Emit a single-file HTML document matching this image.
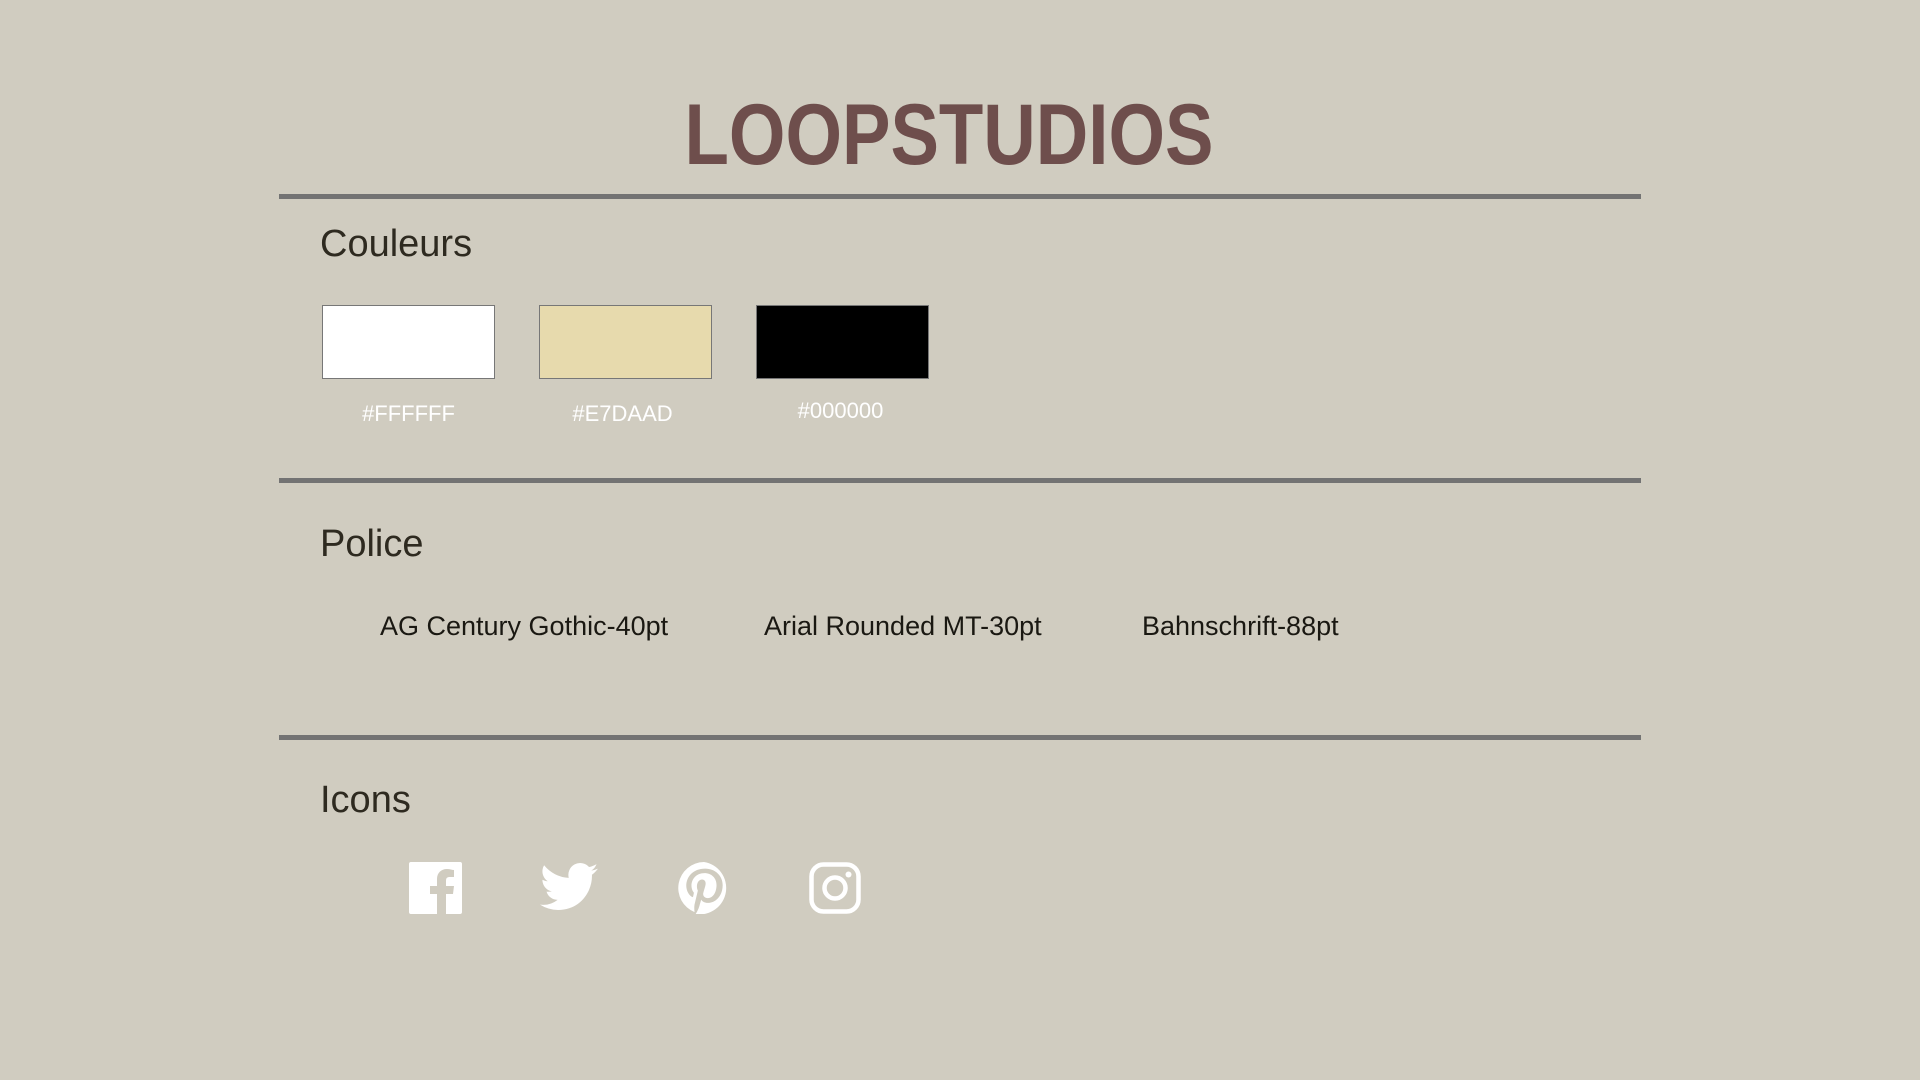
<!DOCTYPE html>
<html><head><meta charset="utf-8"><style>
html,body{margin:0;padding:0}
body{width:1920px;height:1080px;background:#d0ccc0;position:relative;overflow:hidden;font-family:"Liberation Sans",sans-serif}
.a{position:absolute}
.title{left:0;width:1898px;text-align:center;top:92px;font-size:86px;font-weight:bold;color:#6e4e4c;line-height:86px;transform:scaleX(0.845);transform-origin:949px 0}
.hr{left:279px;width:1362px;height:5px;background:#737373}
.h{left:320px;font-size:38px;color:#2e2a20;line-height:40px}
.sw{top:305px;width:171px;height:72px;border:1px solid #777}
.lab{width:173px;text-align:center;color:#fff;font-size:22px;line-height:24px}
.f{top:611px;font-size:27px;color:#1a1812;line-height:30px}
</style></head><body>
<div class="a title">LOOPSTUDIOS</div>
<div class="a hr" style="top:194px"></div>
<div class="a hr" style="top:478px"></div>
<div class="a hr" style="top:735px"></div>
<div class="a h" style="top:224px">Couleurs</div>
<div class="a sw" style="left:322px;background:#fff"></div>
<div class="a sw" style="left:539px;background:#e7daad"></div>
<div class="a sw" style="left:756px;background:#000"></div>
<div class="a lab" style="left:322px;top:402px">#FFFFFF</div>
<div class="a lab" style="left:536px;top:402px">#E7DAAD</div>
<div class="a lab" style="left:754px;top:399px">#000000</div>
<div class="a h" style="top:524px">Police</div>
<div class="a f" style="left:380px">AG Century Gothic-40pt</div>
<div class="a f" style="left:764px">Arial Rounded MT-30pt</div>
<div class="a f" style="left:1142px">Bahnschrift-88pt</div>
<div class="a h" style="top:780px">Icons</div>
<svg class="a" style="left:409px;top:862px" width="53" height="52" viewBox="0 0 53 52"><path fill="#fff" d="M2 0h49a2 2 0 0 1 2 2v48a2 2 0 0 1-2 2H37V32h7l1-8h-8v-5c0-3 1-4 4-4h4V8c-2 0-4-1-7-1-6 0-10 4-10 10v7h-7v8h7v20H2a2 2 0 0 1-2-2V2a2 2 0 0 1 2-2z"/></svg>
<svg class="a" style="left:540px;top:862px" width="58" height="52" viewBox="0 0 24 21"><path fill="#fff" d="M24 2.5c-.9.4-1.8.7-2.8.8 1-.6 1.8-1.6 2.2-2.7-1 .6-2 1-3.1 1.2A4.9 4.9 0 0 0 11.9 6.3 14 14 0 0 1 1.7 1.1a4.9 4.9 0 0 0 1.5 6.6c-.8 0-1.6-.3-2.2-.6 0 2.4 1.7 4.4 3.9 4.8-.7.2-1.5.2-2.2.1.6 2 2.4 3.4 4.6 3.4A9.9 9.9 0 0 1 0 17.4 14 14 0 0 0 7.5 19.6c9.1 0 14-7.5 14-14v-.6c1-.7 1.8-1.6 2.5-2.5z"/></svg>
<svg class="a" style="left:675px;top:862px" width="58" height="52" viewBox="1 1 22 22"><path fill="#fff" d="M12 1a11 11 0 0 0-4 21.2c-.1-.9-.2-2.2 0-3.2l1.4-5.9s-.4-.7-.4-1.8c0-1.7 1-2.9 2.2-2.9 1 0 1.5.8 1.5 1.7 0 1-.7 2.6-1 4-.3 1.200.6 2.2 1.8 2.2 2.2 0 3.8-2.3 3.8-5.6 0-2.9-2.1-5-5.100-5-3.5 0-5.5 2.6-5.5 5.3 0 1.1.4 2.2.9 2.8.1.1.1.2.1.4l-.3 1.4c-.1.2-.2.3-.4.2-1.5-.7-2.5-2.9-2.5-4.7 0-3.8 2.8-7.3 8-7.3 4.2 0 7.4 3 7.4 7 0 4.1-2.6 7.5-6.3 7.5-1.2 0-2.4-.6-2.8-1.4l-.8 2.9c-.3 1.1-1 2.4-1.5 3.2A11 11 0 1 0 12 1z"/></svg>
<svg class="a" style="left:809px;top:862px" width="52" height="52" viewBox="0 0 52 52"><rect x="2.5" y="2.5" width="47" height="47" rx="12" fill="none" stroke="#fff" stroke-width="4.5"/><circle cx="26" cy="26" r="10.5" fill="none" stroke="#fff" stroke-width="4.5"/><circle cx="39.5" cy="12.5" r="3" fill="#fff"/></svg>
</body></html>
